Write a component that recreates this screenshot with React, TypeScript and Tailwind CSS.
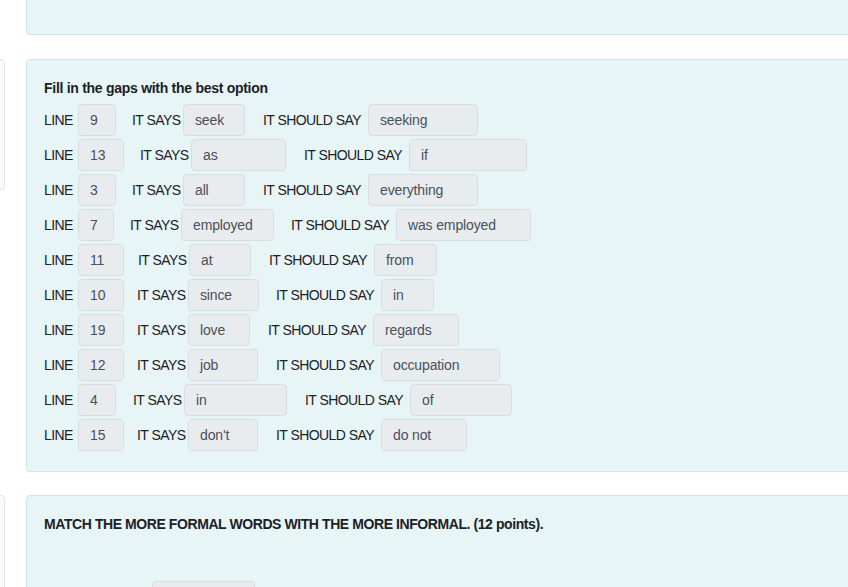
import React from 'react'

type Row = {
  line: string
  lineW: number
  says: string
  saysGap: number
  saysW: number
  should: string
  shouldGap: number
  shouldW: number
}

const rows: Row[] = [
  { line: '9', lineW: 38, says: 'seek', saysGap: 16, saysW: 62, should: 'seeking', shouldGap: 18, shouldW: 110 },
  { line: '13', lineW: 46, says: 'as', saysGap: 16, saysW: 95, should: 'if', shouldGap: 18, shouldW: 118 },
  { line: '3', lineW: 38, says: 'all', saysGap: 16, saysW: 62, should: 'everything', shouldGap: 18, shouldW: 110 },
  { line: '7', lineW: 36, says: 'employed', saysGap: 16, saysW: 93, should: 'was employed', shouldGap: 17, shouldW: 135 },
  { line: '11', lineW: 46, says: 'at', saysGap: 14, saysW: 62, should: 'from', shouldGap: 18, shouldW: 63 },
  { line: '10', lineW: 46, says: 'since', saysGap: 13, saysW: 71, should: 'in', shouldGap: 17, shouldW: 53 },
  { line: '19', lineW: 46, says: 'love', saysGap: 13, saysW: 62, should: 'regards', shouldGap: 18, shouldW: 86 },
  { line: '12', lineW: 46, says: 'job', saysGap: 13, saysW: 70, should: 'occupation', shouldGap: 18, shouldW: 119 },
  { line: '4', lineW: 38, says: 'in', saysGap: 17, saysW: 103, should: 'of', shouldGap: 18, shouldW: 102 },
  { line: '15', lineW: 46, says: "don't", saysGap: 13, saysW: 70, should: 'do not', shouldGap: 18, shouldW: 86 },
]

function Field({ value, width }: { value: string; width: number }) {
  return (
    <span
      className="flex h-[32px] shrink-0 items-center rounded-[4px] border border-[#d9dde1] bg-[#e9ecef] pl-[11px] text-[#495057] tracking-[-0.01em]"
      style={{ width }}
    >
      {value}
    </span>
  )
}

export default function App() {
  return (
    <div
      className="h-[587px] w-[848px] overflow-hidden bg-white text-[14px] text-[#1d2125]"
      style={{ fontFamily: '"Liberation Sans", Arial, sans-serif' }}
    >
      <div className="flex gap-[21px]">
        {/* left column stubs */}
        <div className="-ml-[40px] flex w-[45px] shrink-0 flex-col">
          <div className="mt-[59px] h-[131px] rounded-[4px] border border-[#dee2e6] bg-[#fbfbfc]" />
          <div className="mt-[305px] h-[120px] rounded-[4px] border border-[#dee2e6] bg-[#fbfbfc]" />
        </div>

        {/* main column */}
        <div className="flex w-[900px] shrink-0 flex-col">
          <div className="-mt-[20px] h-[55px] rounded-[4px] border border-[#c8e6eb] bg-[#e7f5f7]" />

          <div className="mt-[24px] h-[413px] rounded-[4px] border border-[#c8e6eb] bg-[#e7f5f7] pl-[17px] pt-[18px]">
            <h3 className="h-[20px] text-[14px] font-bold leading-[20px] tracking-[-0.02em]">
              Fill in the gaps with the best option
            </h3>
            <div className="mt-[6px] flex flex-col gap-[3px] tracking-[-0.04em]">
              {rows.map((r) => (
                <div key={r.line} className="flex items-center">
                  <span className="w-[34px] shrink-0">LINE</span>
                  <Field value={r.line} width={r.lineW} />
                  <span className="w-[51px] shrink-0" style={{ marginLeft: r.saysGap }}>
                    IT SAYS
                  </span>
                  <Field value={r.says} width={r.saysW} />
                  <span className="w-[105px] shrink-0 whitespace-nowrap" style={{ marginLeft: r.shouldGap }}>
                    IT SHOULD SAY
                  </span>
                  <Field value={r.should} width={r.shouldW} />
                </div>
              ))}
            </div>
          </div>

          <div className="mt-[23px] h-[120px] rounded-[4px] border border-[#c8e6eb] bg-[#e7f5f7] pl-[17px] pt-[18px]">
            <h3 className="h-[20px] text-[14px] font-bold leading-[20px] tracking-[-0.03em]">
              MATCH THE MORE FORMAL WORDS WITH THE MORE INFORMAL. (12 points).
            </h3>
            <div className="ml-[108px] mt-[47px] h-[32px] w-[103px] rounded-[4px] border border-[#d9dde1] bg-[#e9ecef]" />
          </div>
        </div>
      </div>
    </div>
  )
}
